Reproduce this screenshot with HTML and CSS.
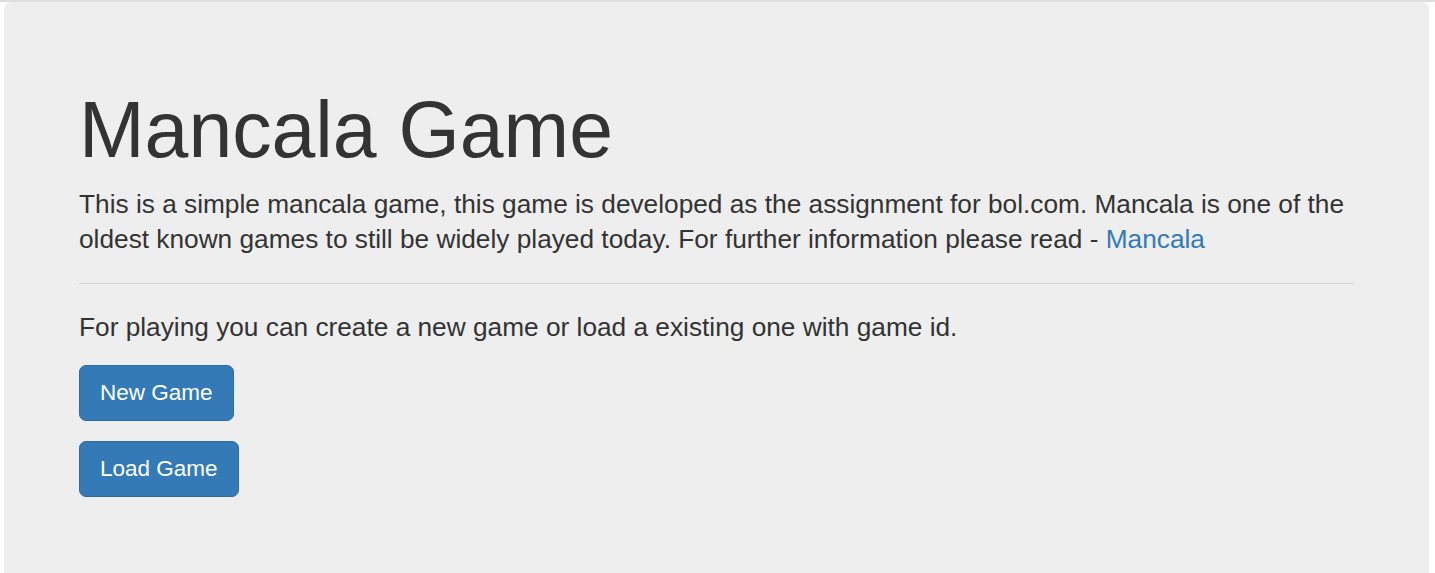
FILE: index.html
```html
<!DOCTYPE html>
<html lang="en">
<head>
<meta charset="utf-8">
<title>Mancala Game</title>
<link rel="stylesheet" href="styles.css">
</head>
<body>
<div class="topline"></div>
<div class="page">
  <div class="jumbotron">
    <h1 class="title">Mancala Game</h1>
    <p class="lead intro">This is a simple mancala game, this game is developed as the assignment for bol.com. Mancala is one of the oldest known games to still be widely played today. For further information please read - <a class="link" href="#">Mancala</a></p>
    <hr class="divider">
    <p class="lead">For playing you can create a new game or load a existing one with game id.</p>
    <div class="actions">
      <button class="btn" type="button">New Game</button>
      <button class="btn" type="button">Load Game</button>
    </div>
  </div>
</div>
</body>
</html>
```

FILE: styles.css
```css
html, body {
  margin: 0;
  padding: 0;
  background: #ffffff;
}
body {
  font-family: "Liberation Sans", Arial, Helvetica, sans-serif;
  color: #333333;
  height: 573px;
  overflow: hidden;
}
.topline {
  height: 2px;
  background: #dedee0;
}
.page {
  padding: 0 6px 0 4px;
}
.jumbotron {
  box-sizing: border-box;
  background: #eeeeee;
  border-radius: 7px 7px 0 0;
  padding: 60px 75px 60px 75px;
  height: 571px;
}
.title {
  margin: 25px 0 13.5px 0;
  font-size: 78.75px;
  line-height: 1.1;
  font-weight: 400;
  color: #333333;
}
.lead {
  margin: 0 0 18.75px 0;
  font-size: 26.25px;
  line-height: 37.5px;
  font-weight: 400;
}
.intro {
  line-height: 35px;
  margin-bottom: 26px;
}
.link {
  color: #337ab7;
  text-decoration: none;
}
.divider {
  border: 0;
  border-top: 1px solid #d5d5d5;
  margin: 26px 0 25px 0;
  height: 0;
}
.actions {
  display: flex;
  flex-direction: column;
  align-items: flex-start;
  gap: 20px;
}
.btn {
  font-family: "Liberation Sans", Arial, Helvetica, sans-serif;
  font-size: 22.5px;
  line-height: 30px;
  padding: 12px 20px;
  color: #ffffff;
  background: #337ab7;
  border: 1px solid #2e6da4;
  border-radius: 7px;
  cursor: pointer;
}
```
